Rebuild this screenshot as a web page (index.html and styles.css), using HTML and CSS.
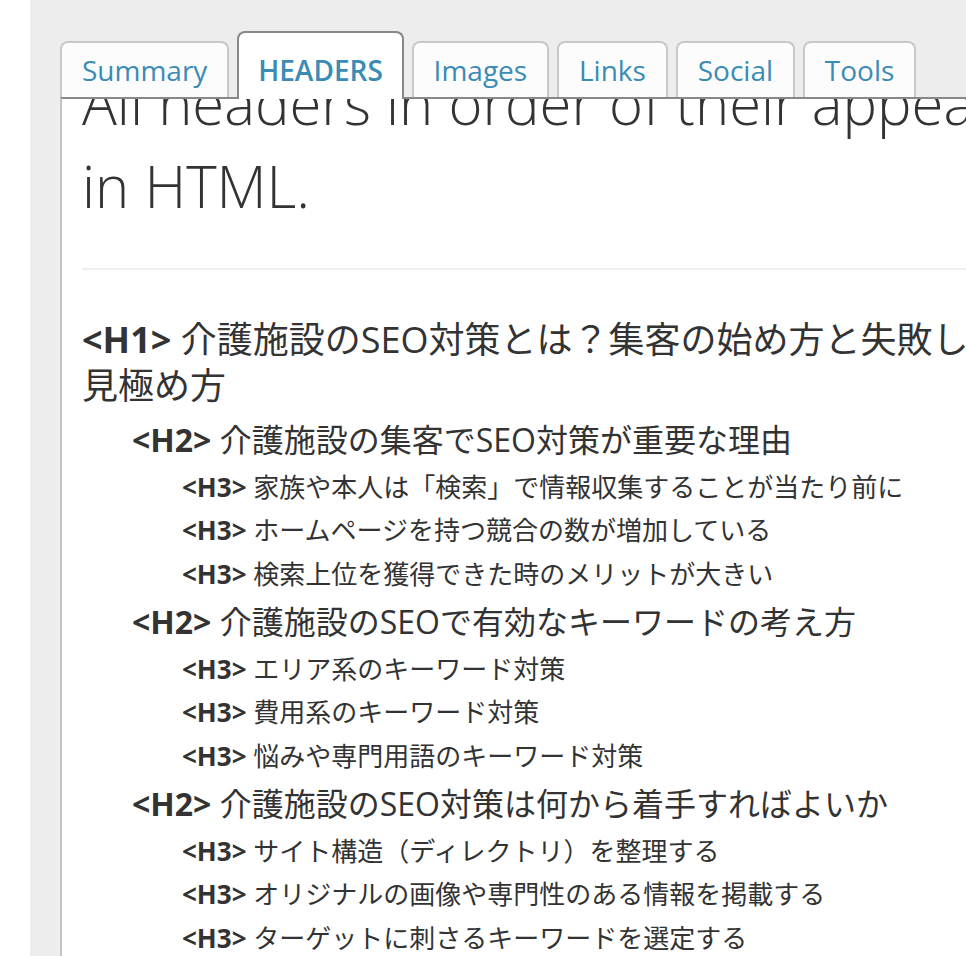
FILE: index.html
```html
<!DOCTYPE html>
<html lang="ja">
<head>
<meta charset="utf-8">
<title>Headers</title>
<link rel="stylesheet" href="styles.css">
</head>
<body>
<div class="app">
  <nav class="tabs">
    <div class="tab">Summary</div>
    <div class="tab active">HEADERS</div>
    <div class="tab">Images</div>
    <div class="tab">Links</div>
    <div class="tab">Social</div>
    <div class="tab">Tools</div>
  </nav>
  <section class="panel">
    <div class="scroll">
      <h1 class="title">All headers in order of their appearance in HTML.</h1>
      <hr class="rule">
      <ul class="outline">
        <li class="lv1"><b class="tag">&lt;H1&gt;</b> 介護施設のSEO対策とは？集客の始め方と失敗しない業者の見極め方</li>
        <li class="lv2"><b class="tag">&lt;H2&gt;</b> 介護施設の集客でSEO対策が重要な理由</li>
        <li class="lv3"><b class="tag">&lt;H3&gt;</b> 家族や本人は「検索」で情報収集することが当たり前に</li>
        <li class="lv3"><b class="tag">&lt;H3&gt;</b> ホームページを持つ競合の数が増加している</li>
        <li class="lv3"><b class="tag">&lt;H3&gt;</b> 検索上位を獲得できた時のメリットが大きい</li>
        <li class="lv2"><b class="tag">&lt;H2&gt;</b> 介護施設のSEOで有効なキーワードの考え方</li>
        <li class="lv3"><b class="tag">&lt;H3&gt;</b> エリア系のキーワード対策</li>
        <li class="lv3"><b class="tag">&lt;H3&gt;</b> 費用系のキーワード対策</li>
        <li class="lv3"><b class="tag">&lt;H3&gt;</b> 悩みや専門用語のキーワード対策</li>
        <li class="lv2"><b class="tag">&lt;H2&gt;</b> 介護施設のSEO対策は何から着手すればよいか</li>
        <li class="lv3"><b class="tag">&lt;H3&gt;</b> サイト構造（ディレクトリ）を整理する</li>
        <li class="lv3"><b class="tag">&lt;H3&gt;</b> オリジナルの画像や専門性のある情報を掲載する</li>
        <li class="lv3"><b class="tag">&lt;H3&gt;</b> ターゲットに刺さるキーワードを選定する</li>
      </ul>
    </div>
  </section>
</div>
</body>
</html>
```

FILE: styles.css
```css
html, body {
  margin: 0;
  padding: 0;
  background: #ffffff;
  overflow: hidden;
}

.app {
  margin-left: 30px;
  height: 956px;
  background: #ededed;
  padding: 31px 0 0 30px;
  box-sizing: border-box;
  font-family: "Open Sans", "Noto Sans CJK JP", sans-serif;
}

.tabs {
  display: flex;
  align-items: flex-end;
  gap: 7.8px;
}

.tab {
  font-size: 28px;
  line-height: 38px;
  color: #3a8bb5;
  background: #fcfcfc;
  border: 2px solid #c8c8c8;
  border-bottom: 0;
  border-radius: 8px 8px 0 0;
  padding: 8px 20px;
  white-space: nowrap;
}

.tab.active {
  background: #ffffff;
  border-color: #888888;
  padding: 18px 19px 10px;
  margin-bottom: -2px;
  position: relative;
  z-index: 1;
  font-weight: 600;
}

.panel {
  width: 1090px;
  height: 900px;
  background: #ffffff;
  border-top: 2px solid #888888;
  border-left: 2px solid #c4c4c4;
  padding: 0 21px 0 20px;
  overflow: hidden;
}

.scroll {
  margin-top: -38px;
  color: #333333;
}

.title {
  margin: 0;
  font-size: 58px;
  line-height: 83px;
  font-weight: 300;
  color: #333333;
}

.rule {
  border: 0;
  height: 2px;
  background: #eeeeee;
  margin: 41px 0 0;
}

.outline {
  list-style: none;
  margin: 47px 0 0;
  padding: 0;
}

.tag {
  font-weight: 700;
}

.outline .lv1 {
  font-size: 36px;
  line-height: 46px;
  margin: 0 0 5px;
}

.outline .lv2 {
  font-size: 32px;
  line-height: 52px;
  padding-left: 50px;
}

.outline .lv3 {
  font-size: 26px;
  line-height: 43.33px;
  padding-left: 100px;
}
```
